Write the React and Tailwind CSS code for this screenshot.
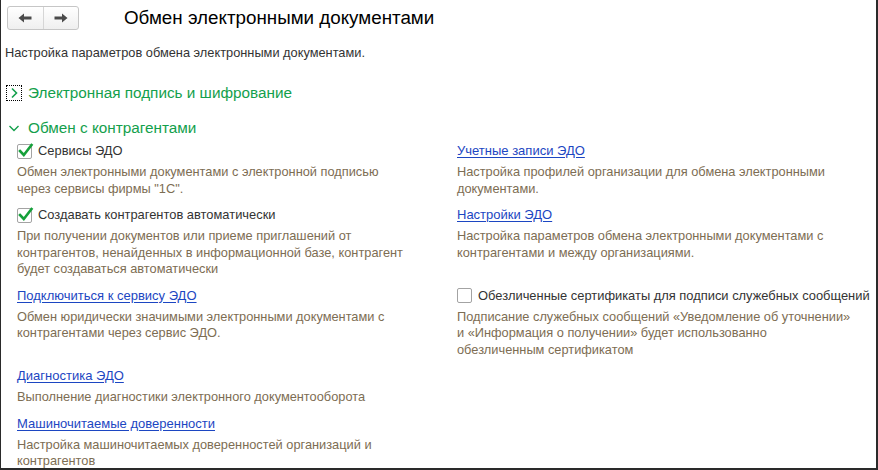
import React from "react";

const descClass = "mt-[5px] text-[12.8px] leading-[16.5px] text-[#7d6d53]";
const linkClass = "text-[#1c46c2] underline underline-offset-[2px] decoration-[#1c46c2]";

function Checkbox({ checked }) {
  return (
    <span className="relative mr-[6px] inline-block h-[15px] w-[15px] shrink-0 rounded-[2px] border border-[#a3a3a3] bg-white">
      {checked ? (
        <svg
          className="absolute -left-[1px] -top-[3px]"
          width="17"
          height="17"
          viewBox="0 0 17 17"
        >
          <path
            d="M3 9 L6.8 13 L14.5 3"
            fill="none"
            stroke="#15a03a"
            strokeWidth="2.6"
            strokeLinecap="square"
          />
        </svg>
      ) : null}
    </span>
  );
}

function Lines({ lines }) {
  return (
    <p className={descClass}>
      {lines.map((line, i) => (
        <span key={i} className="block">
          {line}
        </span>
      ))}
    </p>
  );
}

function CheckItem({ checked, label, lines }) {
  return (
    <div>
      <div className="flex h-[16px] items-center text-[12.9px] leading-[16px] text-[#333]">
        <Checkbox checked={checked} />
        {label}
      </div>
      <Lines lines={lines} />
    </div>
  );
}

function LinkItem({ label, lines }) {
  return (
    <div>
      <div className="h-[16px] text-[13px] leading-[16px]">
        <a className={linkClass} href="#">
          {label}
        </a>
      </div>
      <Lines lines={lines} />
    </div>
  );
}

function Arrow({ dir }) {
  return (
    <svg width="14" height="10" viewBox="0 0 14 10">
      {dir === "left" ? (
        <path d="M0.5 5 L6 0.5 L6 3.6 L13.5 3.6 L13.5 6.4 L6 6.4 L6 9.5 Z" fill="#4b4b4b" />
      ) : (
        <path d="M13.5 5 L8 0.5 L8 3.6 L0.5 3.6 L0.5 6.4 L8 6.4 L8 9.5 Z" fill="#4b4b4b" />
      )}
    </svg>
  );
}

export default function App() {
  return (
    <div className="h-[470px] w-[878px] overflow-hidden border-b-2 border-l border-r-2 border-[#2a2a2a] bg-white font-['Liberation_Sans',Arial,sans-serif]">
      <div className="flex items-center pl-[6px] pt-[6px]">
        <div className="flex h-[24px] w-[72px] overflow-hidden rounded-[3px] border border-[#c6c6c6] bg-gradient-to-b from-white to-[#efefef]">
          <button type="button" className="flex flex-1 items-center justify-center border-r border-[#d6d6d6]">
            <Arrow dir="left" />
          </button>
          <button type="button" className="flex flex-1 items-center justify-center">
            <Arrow dir="right" />
          </button>
        </div>
        <h1 className="ml-[45px] text-[18.8px] leading-[24px] text-black">
          Обмен электронными документами
        </h1>
      </div>

      <p className="mt-[15px] pl-[4px] text-[12.8px] leading-[16px] text-[#333]">
        Настройка параметров обмена электронными документами.
      </p>

      <div className="mt-[23px] flex h-[18px] items-center pl-[5px]">
        <span className="flex h-[16px] w-[16px] items-center justify-center border border-dotted border-black">
          <svg width="10" height="12" viewBox="0 0 10 12">
            <path d="M3 1.5 L7.5 6 L3 10.5" fill="none" stroke="#13a04c" strokeWidth="1.6" />
          </svg>
        </span>
        <span className="ml-[6px] text-[15.3px] leading-[18px] text-[#13a04c]">
          Электронная подпись и шифрование
        </span>
      </div>

      <div className="mt-[17px] flex h-[18px] items-center pl-[7px]">
        <svg width="12" height="10" viewBox="0 0 12 10">
          <path d="M1.5 3 L6 7.5 L10.5 3" fill="none" stroke="#13a04c" strokeWidth="1.4" />
        </svg>
        <span className="ml-[8px] text-[15.3px] leading-[18px] text-[#13a04c]">
          Обмен с контрагентами
        </span>
      </div>

      <div className="mt-[6px] grid grid-cols-[440px_1fr] gap-y-[10px] pl-[16px]">
        <CheckItem
          checked
          label="Сервисы ЭДО"
          lines={[
            "Обмен электронными документами с электронной подписью",
            "через сервисы фирмы \"1С\".",
          ]}
        />
        <LinkItem
          label="Учетные записи ЭДО"
          lines={[
            "Настройка профилей организации для обмена электронными",
            "документами.",
          ]}
        />
        <CheckItem
          checked
          label="Создавать контрагентов автоматически"
          lines={[
            "При получении документов или приеме приглашений от",
            "контрагентов, ненайденных в информационной базе, контрагент",
            "будет создаваться автоматически",
          ]}
        />
        <LinkItem
          label="Настройки ЭДО"
          lines={[
            "Настройка параметров обмена электронными документами с",
            "контрагентами и между организациями.",
          ]}
        />
        <LinkItem
          label="Подключиться к сервису ЭДО"
          lines={[
            "Обмен юридически значимыми электронными документами с",
            "контрагентами через сервис ЭДО.",
          ]}
        />
        <CheckItem
          checked={false}
          label="Обезличенные сертификаты для подписи служебных сообщений"
          lines={[
            "Подписание служебных сообщений «Уведомление об уточнении»",
            "и «Информация о получении» будет использованно",
            "обезличенным сертификатом",
          ]}
        />
        <LinkItem
          label="Диагностика ЭДО"
          lines={["Выполнение диагностики электронного документооборота"]}
        />
        <div />
        <LinkItem
          label="Машиночитаемые доверенности"
          lines={[
            "Настройка машиночитаемых доверенностей организаций и",
            "контрагентов",
          ]}
        />
        <div />
      </div>
    </div>
  );
}
